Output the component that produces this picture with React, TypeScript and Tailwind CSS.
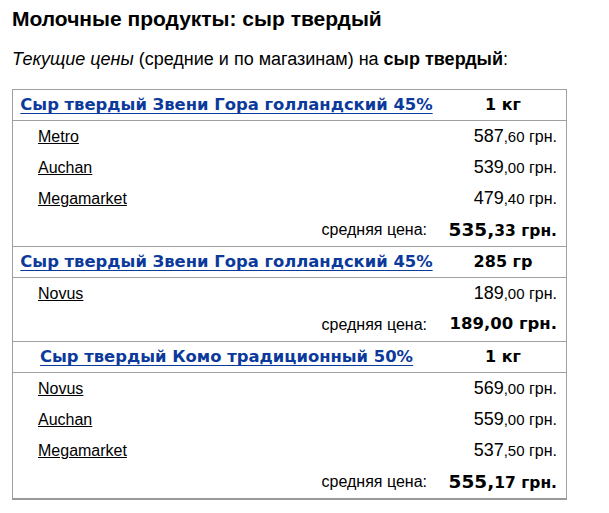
import React from "react";

type Store = { name: string; whole: string; frac: string };
type Product = {
  title: string;
  unit: string;
  stores: Store[];
  avgWhole: string;
  avgFrac: string;
  avgSame?: boolean;
};

const products: Product[] = [
  {
    title: "Сыр твердый Звени Гора голландский 45%",
    unit: "1 кг",
    stores: [
      { name: "Metro", whole: "587", frac: ",60" },
      { name: "Auchan", whole: "539", frac: ",00" },
      { name: "Megamarket", whole: "479", frac: ",40" },
    ],
    avgWhole: "535,",
    avgFrac: "33 грн.",
  },
  {
    title: "Сыр твердый Звени Гора голландский 45%",
    unit: "285 гр",
    stores: [{ name: "Novus", whole: "189", frac: ",00" }],
    avgWhole: "189,",
    avgFrac: "00 грн.",
    avgSame: true,
  },
  {
    title: "Сыр твердый Комо традиционный 50%",
    unit: "1 кг",
    stores: [
      { name: "Novus", whole: "569", frac: ",00" },
      { name: "Auchan", whole: "559", frac: ",00" },
      { name: "Megamarket", whole: "537", frac: ",50" },
    ],
    avgWhole: "555,",
    avgFrac: "17 грн.",
  },
];

const arial = "font-['Liberation_Sans',Arial,sans-serif]";
const verdana = "font-['DejaVu_Sans',Verdana,sans-serif]";

function ProductBlock({ p }: { p: Product }) {
  return (
    <div>
      {/* product header */}
      <div className="flex h-[31px] items-center border-b border-[#a0a0a0]">
        <div className="w-[427px] text-center whitespace-nowrap">
          <a
            href="#"
            className={`${verdana} text-[16.4px] font-bold text-[#0b3a9c] underline underline-offset-[3px]`}
          >
            {p.title}
          </a>
        </div>
        <div className={`flex-1 text-center ${verdana} text-[16px] font-bold text-black`}>
          {p.unit}
        </div>
      </div>

      <div className="pb-px">
        {p.stores.map((s) => (
          <div key={s.name} className="flex h-[31px] items-center">
            <div className="w-[427px] pl-[25px]">
              <a href="#" className={`${arial} text-[16px] text-black underline`}>
                {s.name}
              </a>
            </div>
            <div className={`flex-1 pr-[9px] text-right ${arial} text-black whitespace-nowrap`}>
              <span className="text-[18px]">{s.whole}</span>
              <span className="text-[15px]">{s.frac}</span>
              <span className="text-[16px]"> грн.</span>
            </div>
          </div>
        ))}

        {/* average */}
        <div className="flex h-[31px] items-center">
          <div className={`w-[427px] pr-[13px] text-right ${arial} text-[16px] text-black`}>
            средняя цена:
          </div>
          <div className={`flex-1 pr-[9px] text-right ${verdana} font-bold text-black whitespace-nowrap`}>
            {p.avgSame ? (
              <span className="text-[16.5px]">
                {p.avgWhole}
                {p.avgFrac}
              </span>
            ) : (
              <>
                <span className="text-[18.5px]">{p.avgWhole}</span>
                <span className="text-[15.5px]">{p.avgFrac}</span>
              </>
            )}
          </div>
        </div>
      </div>
    </div>
  );
}

export default function App() {
  return (
    <div className="min-h-screen w-full bg-white px-[12px] pt-[7px] text-black">
      <h1 className={`${arial} text-[21px] font-bold leading-[24px]`}>
        Молочные продукты: сыр твердый
      </h1>

      <p className={`${arial} mt-[18px] text-[18px] leading-[21px]`}>
        <i>Текущие цены</i> (средние и по магазинам) на <b>сыр твердый</b>:
      </p>

      <div className="mt-[19px] w-[555px] border border-b-2 border-[#a0a0a0] border-b-[#999]">
        {products.map((p, i) => (
          <div key={i} className={i > 0 ? "border-t border-[#a0a0a0]" : ""}>
            <ProductBlock p={p} />
          </div>
        ))}
      </div>
    </div>
  );
}
